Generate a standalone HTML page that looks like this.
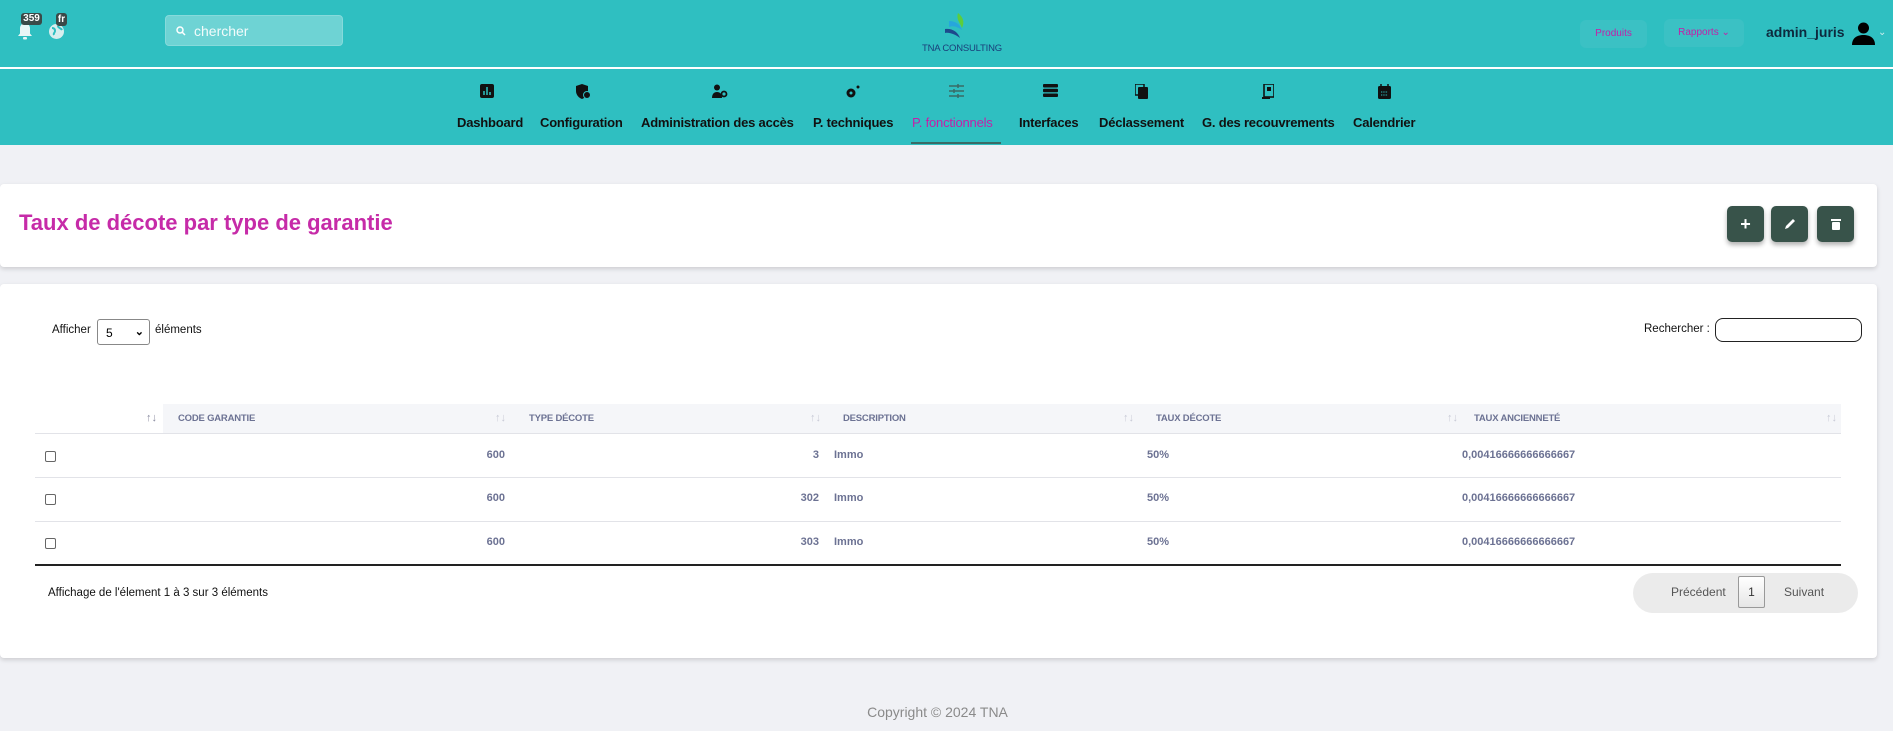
<!DOCTYPE html>
<html><head><meta charset="utf-8"><style>
*{box-sizing:border-box;margin:0;padding:0}
body{width:1893px;height:731px;background:#f0f1f5;font-family:"Liberation Sans",sans-serif;position:relative;overflow:hidden}
.a{position:absolute}
.top{left:0;top:0;width:1893px;height:145px;background:#2fbfc1}
.line{left:0;top:67px;width:1893px;height:2px;background:#fff}
.nav{font-size:13px;letter-spacing:-0.2px;font-weight:bold;color:#111;top:115px;white-space:nowrap}
.ico{top:84px}
.card{background:#fff;border-radius:4px;box-shadow:0 2px 5px rgba(0,0,0,.15)}
.btn{width:37px;height:36px;top:206px;background:#38534a;border-radius:5px;box-shadow:0 3px 5px rgba(0,0,0,.3);display:flex;align-items:center;justify-content:center;color:#fff}
.th{top:404px;height:29px;font-size:9.5px;letter-spacing:-0.2px;font-weight:bold;color:#6c7293;line-height:29px}
.td{font-size:11px;font-weight:bold;color:#6c7293}
.sort{font-size:11px;color:#c8cad6;top:412px}
.hr{left:35px;width:1806px;height:1px;background:#e2e3e8}
.cb{width:11px;height:11px;border:1.5px solid #666;border-radius:2px;left:45px}
</style></head><body>
<div class="a top"></div>
<div class="a line"></div>
<svg class="a" style="left:16px;top:21px" width="18" height="20" viewBox="0 0 18 20"><path d="M9 2c-3 0-5 2.5-5 5.5v5L2 15h14l-2-2.5v-5C14 4.5 12 2 9 2z" fill="#e8f6f6"/><rect x="7" y="16" width="4" height="2.5" rx="1" fill="#e8f6f6"/></svg>
<div class="a" style="left:21px;top:13px;width:21px;height:12px;background:#3a4a48;border-radius:3px;color:#fff;font-size:10px;font-weight:bold;text-align:center;line-height:12px">359</div>
<svg class="a" style="left:48px;top:23px" width="17" height="17" viewBox="0 0 17 17"><circle cx="8.5" cy="8.5" r="7.5" fill="#d7eeee"/><path d="M4 5c2 0 3 1 3 3s-2 2-1 4M10 3c0 2 3 2 4 4" stroke="#2fbfc1" stroke-width="2" fill="none"/></svg>
<div class="a" style="left:56px;top:13px;width:11px;height:13px;background:#3a4a48;border-radius:3px;color:#fff;font-size:10px;font-weight:bold;text-align:center;line-height:13px">fr</div>
<div class="a" style="left:165px;top:15px;width:178px;height:31px;background:#6ed3d4;border-radius:4px;border:1px solid #86dadb"></div>
<svg class="a" style="left:176px;top:26px" width="10" height="10" viewBox="0 0 10 10"><circle cx="4" cy="4" r="3" stroke="#fff" stroke-width="1.5" fill="none"/><path d="M6 6l3 3" stroke="#fff" stroke-width="1.5"/></svg>
<div class="a" style="left:194px;top:23px;font-size:14px;color:#f2fbfb">chercher</div>
<svg class="a" style="left:930px;top:12px" width="40" height="30" viewBox="0 0 40 30"><path d="M28 1c5 4 7 9 4 15-2-5-6-9-4-15z" fill="#5ccd3c"/><path d="M19 9c6 0 11 3 13 9-4-3-9-5-13-3z" fill="#27a6dc"/><path d="M15 17c7-1 13 3 15 9-4-3-10-6-15-5z" fill="#1d4a8c"/></svg>
<div class="a" style="left:905px;top:43px;width:114px;text-align:center;font-size:9.5px;color:#1a3f7a;letter-spacing:-0.2px">TNA CONSULTING</div>
<div class="a" style="left:1580px;top:20px;width:67px;height:28px;background:#3bc1c4;border-radius:6px;color:#c41fa8;font-size:10px;text-align:center;line-height:28px">Produits</div>
<div class="a" style="left:1664px;top:19px;width:80px;height:28px;background:#3bc1c4;border-radius:6px;color:#c41fa8;font-size:10px;text-align:center;line-height:28px">Rapports &#8964;</div>
<div class="a" style="left:1766px;top:24px;font-size:14px;font-weight:bold;color:#0d2a3e">admin_juris</div>
<svg class="a" style="left:1851px;top:22px" width="25" height="23" viewBox="0 0 25 23"><circle cx="12.5" cy="6" r="5.5" fill="#000"/><path d="M1 23c0-7 5-10 11.5-10S24 16 24 23z" fill="#000"/></svg>
<div class="a" style="left:1878px;top:27px;font-size:10px;color:#cfeeee">&#8964;</div>
<svg class="a ico" style="left:480px" width="14" height="14"><rect width="14" height="14" rx="2" fill="#111"/><path d="M4 11V7M7 11V3M10 11V8" stroke="#2fbfc1" stroke-width="1.5"/></svg>
<svg class="a ico" style="left:575px" width="16" height="15"><path d="M1 2l6-2 6 2v5c0 4-3 7-6 8-3-1-6-4-6-8z" fill="#111"/><circle cx="12" cy="11" r="3.5" fill="#111" stroke="#2fbfc1"/></svg>
<svg class="a ico" style="left:712px" width="16" height="14"><circle cx="5" cy="3.5" r="3" fill="#111"/><path d="M0 14c0-4 2-6 5-6s5 2 5 6z" fill="#111"/><circle cx="12" cy="10" r="2.5" fill="none" stroke="#111" stroke-width="1.8"/></svg>
<svg class="a ico" style="left:844px" width="16" height="15"><circle cx="7" cy="9" r="4.5" fill="#111"/><circle cx="7" cy="9" r="1.5" fill="#2fbfc1"/><circle cx="14" cy="3" r="1.5" fill="#111"/></svg>
<svg class="a ico" style="left:949px" width="15" height="14"><path d="M0 2h15M0 7h15M0 12h15M9 0v4M5 5v4M9 10v4" stroke="#3a6b66" stroke-width="1.5"/></svg>
<svg class="a ico" style="left:1043px" width="15" height="13"><rect y="0" width="15" height="3.5" rx="1" fill="#111"/><rect y="4.8" width="15" height="3.5" rx="1" fill="#111"/><rect y="9.5" width="15" height="3.5" rx="1" fill="#111"/></svg>
<svg class="a ico" style="left:1135px" width="14" height="15"><rect x="0" y="0" width="9" height="11" fill="none" stroke="#111" stroke-width="1.5"/><rect x="3" y="3" width="10" height="12" rx="1" fill="#111"/></svg>
<svg class="a ico" style="left:1262px" width="12" height="15"><rect x="2" y="0" width="10" height="13" fill="none" stroke="#111" stroke-width="1.6"/><path d="M0 14h8" stroke="#111" stroke-width="2"/><rect x="5" y="3" width="4" height="4" fill="#111"/></svg>
<svg class="a ico" style="left:1378px" width="13" height="15"><rect x="0" y="2" width="13" height="13" rx="1.5" fill="#111"/><path d="M3 0v3M10 0v3" stroke="#111" stroke-width="1.5"/><path d="M3 8h7M3 11h7" stroke="#2fbfc1" stroke-width="1" stroke-dasharray="1.3 1"/></svg>
<div class="a nav" style="left:457px">Dashboard</div>
<div class="a nav" style="left:540px">Configuration</div>
<div class="a nav" style="left:641px">Administration des accès</div>
<div class="a nav" style="left:813px">P. techniques</div>
<div class="a nav" style="left:912px;color:#c41fa8;font-weight:normal">P. fonctionnels</div>
<div class="a" style="left:911px;top:142px;width:90px;height:2px;background:#3a6b66"></div>
<div class="a nav" style="left:1019px">Interfaces</div>
<div class="a nav" style="left:1099px">Déclassement</div>
<div class="a nav" style="left:1202px">G. des recouvrements</div>
<div class="a nav" style="left:1353px">Calendrier</div>
<div class="a card" style="left:0;top:184px;width:1877px;height:83px"></div>
<div class="a" style="left:19px;top:210px;font-size:22px;font-weight:bold;color:#c62ba8">Taux de décote par type de garantie</div>
<div class="a btn" style="left:1727px;font-size:18px;font-weight:bold">+</div>
<div class="a btn" style="left:1771px"><svg width="12" height="12"><path d="M1 11l1-3 7-7 2 2-7 7z" fill="#fff"/></svg></div>
<div class="a btn" style="left:1817px"><svg width="10" height="12"><rect x="0" y="1" width="10" height="2" fill="#fff"/><rect x="1" y="4" width="8" height="8" rx="1" fill="#fff"/></svg></div>
<div class="a card" style="left:0;top:284px;width:1877px;height:374px"></div>
<div class="a" style="left:52px;top:324px;font-size:11.5px;color:#111">Afficher</div>
<div class="a" style="left:97px;top:319px;width:53px;height:26px;border:1px solid #888;border-radius:3px;background:#fff;font-size:12px;padding:6px 0 0 8px">5<span style="position:absolute;right:5px;top:5px;font-weight:bold;font-size:11px">&#8964;</span></div>
<div class="a" style="left:155px;top:324px;font-size:11.5px;color:#111">éléments</div>
<div class="a" style="left:1644px;top:323px;font-size:11.5px;color:#111">Rechercher :</div>
<div class="a" style="left:1715px;top:318px;width:147px;height:24px;border:1.5px solid #222;border-radius:8px;background:#fff"></div>
<div class="a" style="left:35px;top:404px;width:1806px;height:29px;background:#f5f6f9"></div>
<div class="a" style="left:35px;top:404px;width:128px;height:29px;background:#fff"></div>
<div class="a sort" style="left:146px;color:#8a8ca0">↑↓</div>
<div class="a th" style="left:178px">CODE GARANTIE</div><div class="a sort" style="left:495px">↑↓</div>
<div class="a th" style="left:529px">TYPE DÉCOTE</div><div class="a sort" style="left:810px">↑↓</div>
<div class="a th" style="left:843px">DESCRIPTION</div><div class="a sort" style="left:1123px">↑↓</div>
<div class="a th" style="left:1156px">TAUX DÉCOTE</div><div class="a sort" style="left:1447px">↑↓</div>
<div class="a th" style="left:1474px">TAUX ANCIENNETÉ</div><div class="a sort" style="left:1826px">↑↓</div>
<div class="a hr" style="top:433px"></div>
<div class="a hr" style="top:477px"></div>
<div class="a hr" style="top:521px"></div>
<div class="a" style="left:35px;top:564px;width:1806px;height:2px;background:#222"></div>
<div class="a cb" style="top:451px"></div>
<div class="a td" style="left:463px;top:449px;width:42px;text-align:right">600</div>
<div class="a td" style="left:770px;top:449px;width:49px;text-align:right">3</div>
<div class="a td" style="left:834px;top:449px">Immo</div>
<div class="a td" style="left:1147px;top:449px">50%</div>
<div class="a td" style="left:1462px;top:449px">0,00416666666666667</div>
<div class="a cb" style="top:494px"></div>
<div class="a td" style="left:463px;top:492px;width:42px;text-align:right">600</div>
<div class="a td" style="left:770px;top:492px;width:49px;text-align:right">302</div>
<div class="a td" style="left:834px;top:492px">Immo</div>
<div class="a td" style="left:1147px;top:492px">50%</div>
<div class="a td" style="left:1462px;top:492px">0,00416666666666667</div>
<div class="a cb" style="top:538px"></div>
<div class="a td" style="left:463px;top:536px;width:42px;text-align:right">600</div>
<div class="a td" style="left:770px;top:536px;width:49px;text-align:right">303</div>
<div class="a td" style="left:834px;top:536px">Immo</div>
<div class="a td" style="left:1147px;top:536px">50%</div>
<div class="a td" style="left:1462px;top:536px">0,00416666666666667</div>
<div class="a" style="left:48px;top:587px;font-size:11.5px;color:#111">Affichage de l'élement 1 à 3 sur 3 éléments</div>
<div class="a" style="left:1633px;top:573px;width:225px;height:40px;background:#ebebeb;border-radius:20px"></div>
<div class="a" style="left:1671px;top:585px;font-size:12px;color:#555">Précédent</div>
<div class="a" style="left:1738px;top:576px;width:27px;height:32px;border:1px solid #999;border-radius:2px;background:linear-gradient(#fff,#e6e6e6);font-size:12px;color:#333;text-align:center;line-height:30px">1</div>
<div class="a" style="left:1784px;top:585px;font-size:12px;color:#555">Suivant</div>
<div class="a" style="left:0;top:704px;width:1875px;text-align:center;font-size:14px;color:#8a8a8a">Copyright © 2024 TNA</div>
</body></html>
